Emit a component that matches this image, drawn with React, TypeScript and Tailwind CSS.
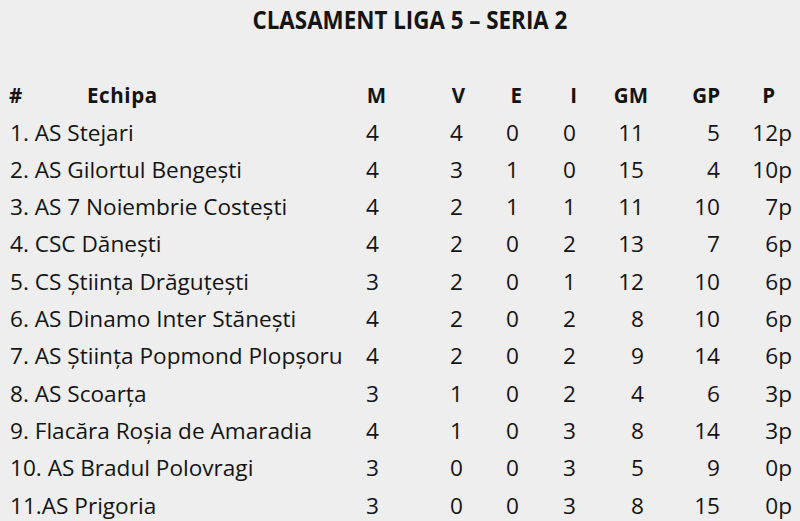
import React from "react";

const rows: [string, string, string, string, string, string, string, string][] = [
  ["1. AS Stejari", "4", "4", "0", "0", "11", "5", "12p"],
  ["2. AS Gilortul Bengești", "4", "3", "1", "0", "15", "4", "10p"],
  ["3. AS 7 Noiembrie Costești", "4", "2", "1", "1", "11", "10", "7p"],
  ["4. CSC Dănești", "4", "2", "0", "2", "13", "7", "6p"],
  ["5. CS Știința Drăguțești", "3", "2", "0", "1", "12", "10", "6p"],
  ["6. AS Dinamo Inter Stănești", "4", "2", "0", "2", "8", "10", "6p"],
  ["7. AS Știința Popmond Plopșoru", "4", "2", "0", "2", "9", "14", "6p"],
  ["8. AS Scoarța", "3", "1", "0", "2", "4", "6", "3p"],
  ["9. Flacăra Roșia de Amaradia", "4", "1", "0", "3", "8", "14", "3p"],
  ["10. AS Bradul Polovragi", "3", "0", "0", "3", "5", "9", "0p"],
  ["11.AS Prigoria", "3", "0", "0", "3", "8", "15", "0p"],
];

const grid = "grid grid-cols-[350px_29px_84px_56px_57px_68px_76px_72px]";

export default function App() {
  return (
    <div
      className="w-[800px] h-[521px] overflow-hidden bg-[#edeeed] text-[#141414]"
      style={{ fontFamily: '"Open Sans", "Noto Sans", sans-serif' }}
    >
      <div className="pt-[2px] pl-[20px] h-[36px] flex justify-center">
        <div className="inline-block origin-center scale-x-[0.895] text-[25px] leading-[34px] font-bold whitespace-nowrap">
          CLASAMENT LIGA 5 – SERIA 2
        </div>
      </div>
      <div className={`${grid} mt-[41px] h-[36.6px] items-center text-[20.5px] leading-[36px] font-bold`}>
        <div className="pl-[9px] flex whitespace-nowrap">
          <span className="w-[78px]">#</span>
          <span className="tracking-[0.6px]">Echipa</span>
        </div>
        <div className="text-right -mr-[7px]">M</div>
        <div className="text-right -mr-[2px]">V</div>
        <div className="text-right -mr-[3px]">E</div>
        <div className="text-right -mr-[1px]">I</div>
        <div className="text-right -mr-[4px]">GM</div>
        <div className="text-right">GP</div>
        <div className="text-right mr-[17px]">P</div>
      </div>
      <div>
        {rows.map((r, i) => (
          <div key={i} className={`${grid} h-[37.3px] text-[22.6px] leading-[37.3px]`}>
            <div className="pl-[10px] whitespace-nowrap">{r[0]}</div>
            {r.slice(1).map((c, j) => (
              <div key={j} className="text-right whitespace-nowrap">
                {c}
              </div>
            ))}
          </div>
        ))}
      </div>
    </div>
  );
}
